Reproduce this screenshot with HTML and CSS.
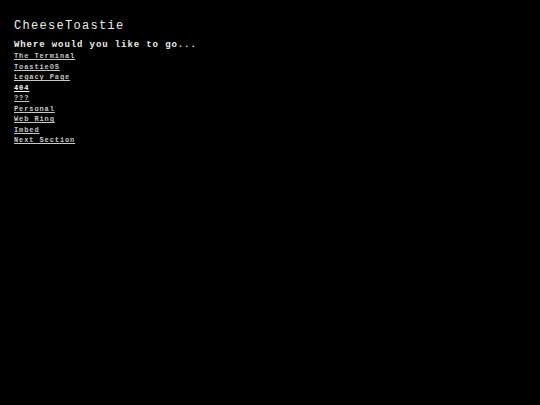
FILE: index.html
```html
<!DOCTYPE html>
<html>
<head>
<meta charset="utf-8">
<link rel="stylesheet" href="styles.css">
</head>
<body>
<div class="page">
  <h1 class="title">CheeseToastie</h1>
  <h2 class="prompt">Where would you like to go...</h2>
  <nav class="links">
    <a class="link" href="#">The Terminal</a>
    <a class="link" href="#">ToastieOS</a>
    <a class="link" href="#">Legacy Page</a>
    <a class="link bright" href="#">404</a>
    <a class="link" href="#">???</a>
    <a class="link" href="#">Personal</a>
    <a class="link" href="#">Web Ring</a>
    <a class="link" href="#">Imbed</a>
    <a class="link" href="#">Next Section</a>
  </nav>
</div>
</body>
</html>
```

FILE: styles.css
```css
html, body {
  margin: 0;
  padding: 0;
  background: #000;
  height: 100%;
}
.page {
  padding: 18px 14px;
  font-family: "Liberation Mono", "DejaVu Sans Mono", monospace;
  color: #eee;
}
.title {
  margin: 0;
  font-size: 12px;
  line-height: 16px;
  font-weight: normal;
  letter-spacing: 1.3px;
}
.prompt {
  margin: 5px 0 0 0;
  font-size: 9px;
  line-height: 12px;
  font-weight: bold;
  letter-spacing: 0.9px;
}
.links {
  display: flex;
  flex-direction: column;
  align-items: flex-start;
  margin-top: 0;
}
.link {
  font-size: 7px;
  line-height: 10.5px;
  letter-spacing: 0.9px;
  color: #c8c8c8;
  font-weight: bold;
  text-decoration: underline;
}
.bright {
  color: #fff;
}
```
